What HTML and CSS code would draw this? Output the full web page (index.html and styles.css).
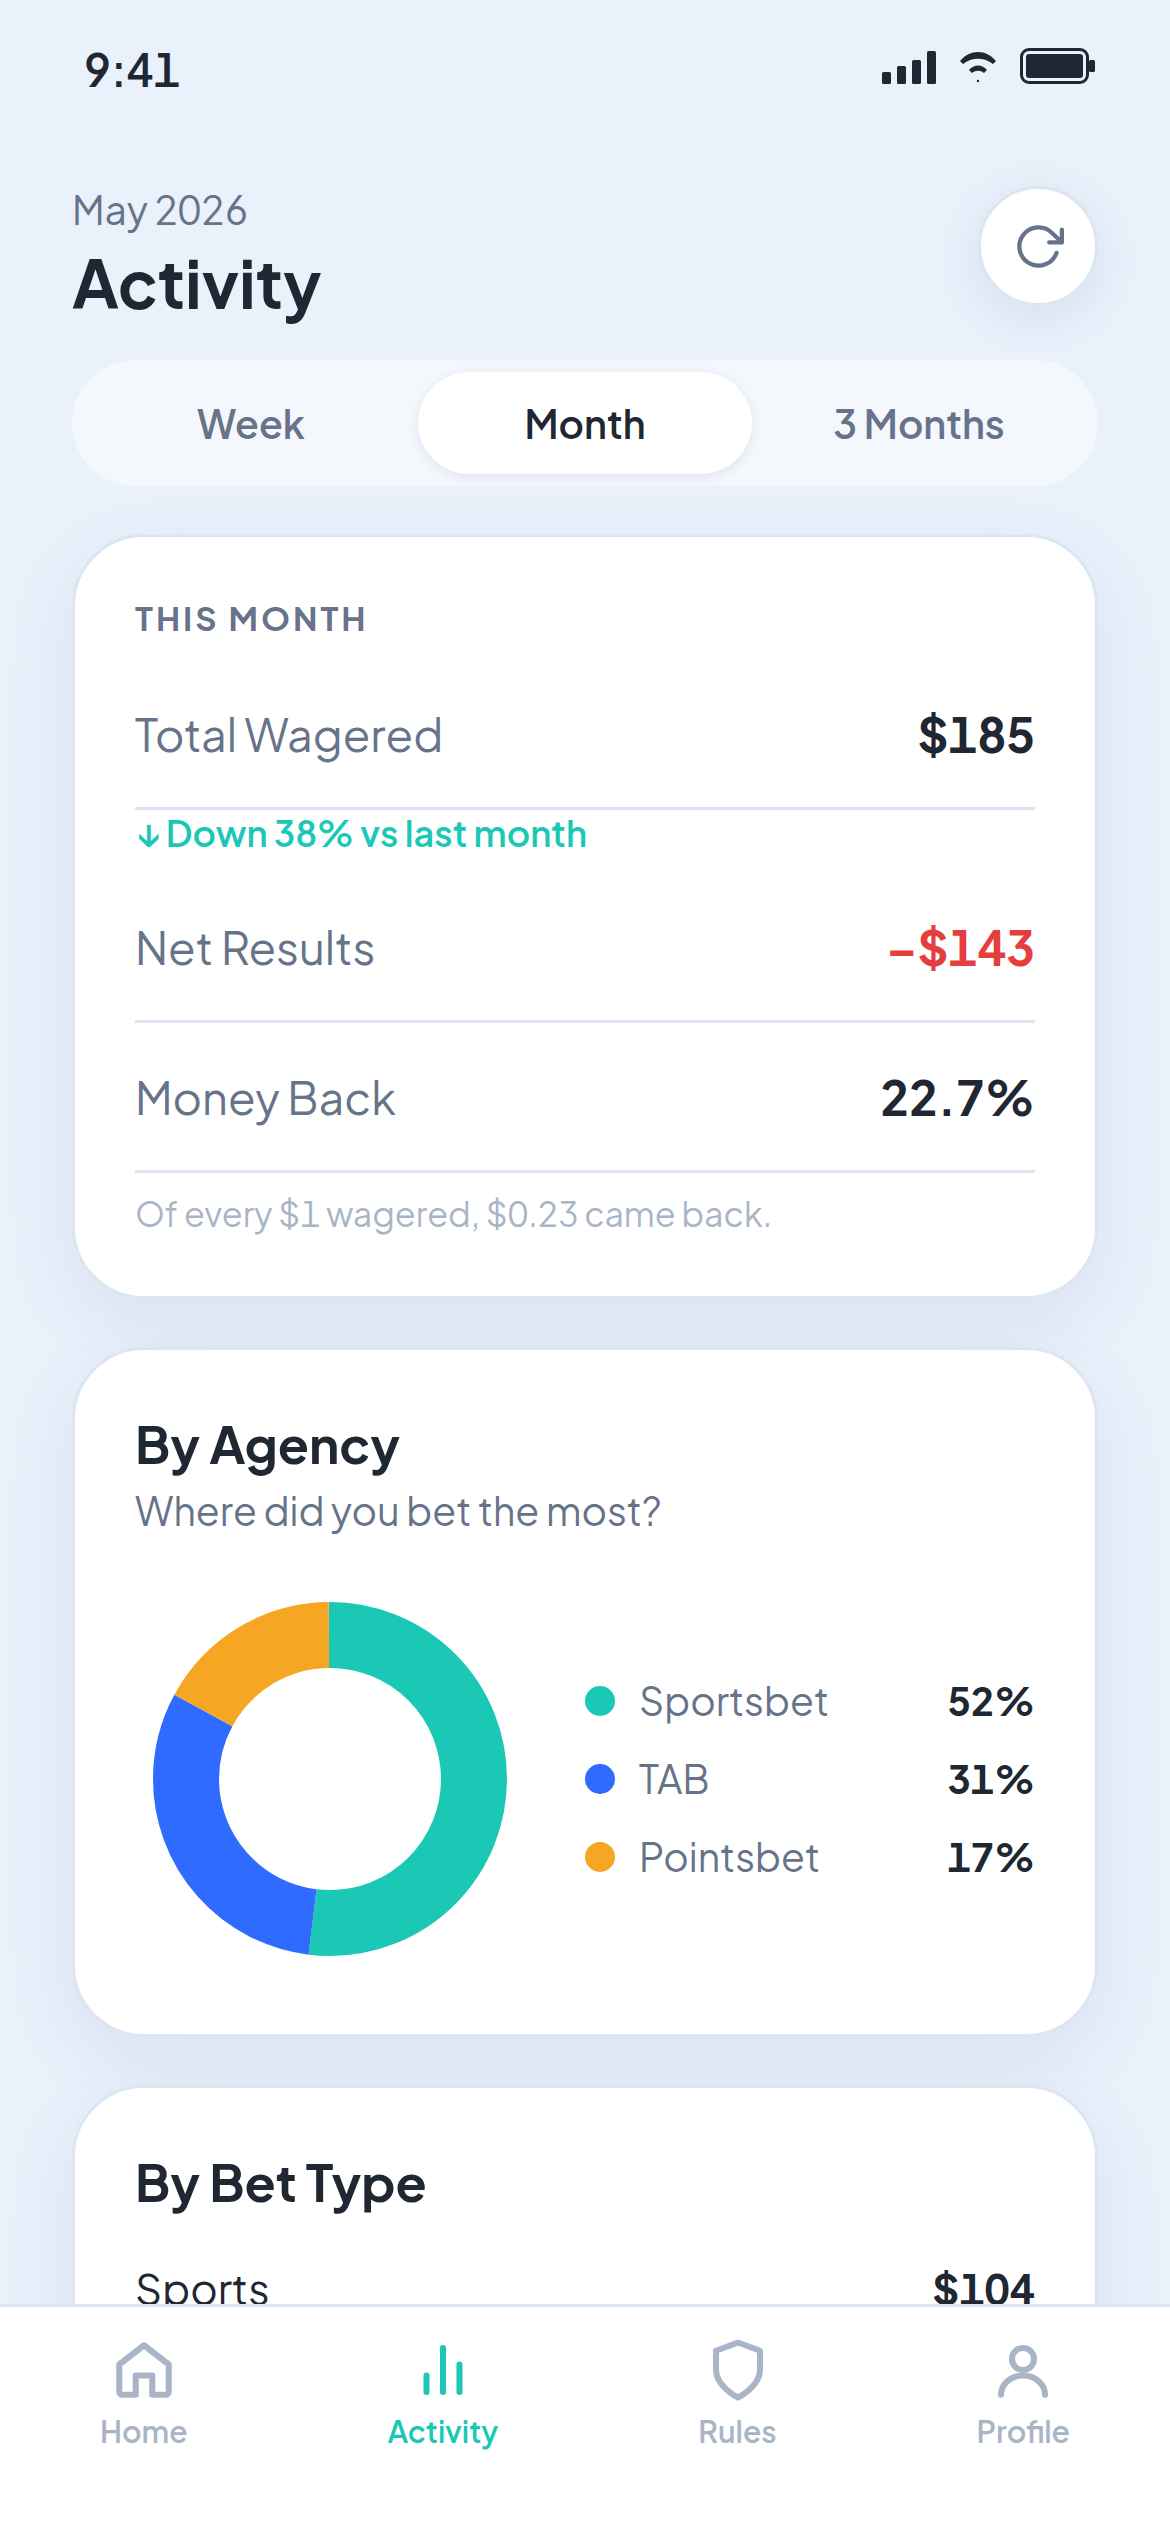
FILE: index.html
```html
<!DOCTYPE html>
<html lang="en">
<head>
    <meta charset="UTF-8">
    <meta name="viewport" content="width=device-width, initial-scale=1.0">
    <title>Activity</title>
    <link rel="stylesheet" href="styles.css">
</head>
<body>
    <div class="status-bar">
        <span class="time">9:41</span>
        <div class="status-icons">
            <svg width="54" height="36" viewBox="0 0 54 36" fill="currentColor" aria-hidden="true">
                <rect x="0" y="24" width="9" height="12" rx="1.5"/>
                <rect x="15" y="18" width="9" height="18" rx="1.5"/>
                <rect x="30" y="12" width="9" height="24" rx="1.5"/>
                <rect x="45" y="3" width="9" height="33" rx="1.5"/>
            </svg>
            <svg width="36" height="36" viewBox="0 0 36 36" fill="currentColor" aria-hidden="true">
                <path d="M0 13C10 1 26 1 36 13L33 16C24 9 12 9 3 16Z"/>
                <path d="M9 22C14 16 22 16 27 22L24 25C20 22 16 22 12 25Z"/>
                <circle cx="18" cy="33" r="1.2"/>
            </svg>
            <svg width="75" height="36" viewBox="0 0 75 36" fill="currentColor" aria-hidden="true">
                <rect x="1.5" y="1.5" width="66" height="33" rx="7.5" fill="none" stroke="currentColor" stroke-width="3"/>
                <rect x="6" y="6" width="57" height="24" rx="3"/>
                <rect x="69" y="12" width="6" height="12" rx="1.5"/>
            </svg>
        </div>
    </div>

    <main class="content">
        <header class="header">
            <div>
                <p class="date">May 2026</p>
                <h1>Activity</h1>
            </div>
            <button class="refresh" aria-label="Refresh">
                <svg width="51" height="51" viewBox="0 0 24 24" fill="none" stroke="currentColor" stroke-width="2" stroke-linecap="round" stroke-linejoin="round">
                    <path d="M23 4v6h-6"/>
                    <path d="M20.49 15a9 9 0 1 1-2.12-9.36L23 10"/>
                </svg>
            </button>
        </header>

        <div class="tabs">
            <button>Week</button>
            <button class="active">Month</button>
            <button>3 Months</button>
        </div>

        <section class="card">
            <h3 class="label">This Month</h3>
            <div class="row">
                <span>Total Wagered</span>
                <strong>$185</strong>
            </div>
            <p class="trend">↓ Down 38% vs last month</p>
            <div class="row">
                <span>Net Results</span>
                <strong class="negative">–$143</strong>
            </div>
            <div class="row">
                <span>Money Back</span>
                <strong>22.7%</strong>
            </div>
            <p class="note">Of every $1 wagered, $0.23 came back.</p>
        </section>

        <section class="card">
            <h2>By Agency</h2>
            <p class="subtitle">Where did you bet the most?</p>
            <div class="chart">
                <svg class="donut" viewBox="0 0 130 130" fill="none" stroke-width="22" role="img" aria-label="Bets by agency">
                    <g transform="rotate(-90 65 65)">
                        <circle class="teal" cx="65" cy="65" r="48" pathLength="100" stroke-dasharray="52 48"/>
                        <circle class="blue" cx="65" cy="65" r="48" pathLength="100" stroke-dasharray="31 69" stroke-dashoffset="-52"/>
                        <circle class="orange" cx="65" cy="65" r="48" pathLength="100" stroke-dasharray="17 83" stroke-dashoffset="-83"/>
                    </g>
                </svg>
                <ul class="legend">
                    <li><i class="dot teal"></i><span>Sportsbet</span><strong>52%</strong></li>
                    <li><i class="dot blue"></i><span>TAB</span><strong>31%</strong></li>
                    <li><i class="dot orange"></i><span>Pointsbet</span><strong>17%</strong></li>
                </ul>
            </div>
        </section>

        <section class="card">
            <h2>By Bet Type</h2>
            <div class="row bet">
                <span>Sports</span>
                <strong>$104</strong>
            </div>
        </section>
    </main>

    <nav class="bottom-nav">
        <a href="#home">
            <svg viewBox="0 0 24 24"><path d="M3 10l9-7 9 7v10a1 1 0 0 1-1 1h-5v-7H9v7H4a1 1 0 0 1-1-1z"/></svg>
            Home
        </a>
        <a href="#activity" class="active">
            <svg viewBox="0 0 24 24"><path d="M6 20v-6M12 20V4M18 20V10"/></svg>
            Activity
        </a>
        <a href="#rules">
            <svg viewBox="0 0 24 24"><path d="M12 22s8-4 8-10V5l-8-3-8 3v7c0 6 8 10 8 10z"/></svg>
            Rules
        </a>
        <a href="#profile">
            <svg viewBox="0 0 24 24"><circle cx="12" cy="8" r="4"/><path d="M4 21a8 7 0 0 1 16 0"/></svg>
            Profile
        </a>
    </nav>
</body>
</html>
```
FILE: styles.css
```css
* {
    box-sizing: border-box;
    margin: 0;
    padding: 0;
}
body {
    font-family: "Plus Jakarta Sans", Inter, sans-serif;
    font-variant-numeric: tabular-nums;
    height: 100vh;
    display: flex;
    flex-direction: column;
    overflow: hidden;
    color: #1f2733;
    background: #e9f1fb;
}
button {
    font-family: inherit;
    border: none;
    cursor: pointer;
}

/* Status bar */
.status-bar {
    flex: none;
    display: flex;
    justify-content: space-between;
    align-items: center;
    height: 132px;
    padding: 0 75px 0 84px;
}
.time {
    font-size: 45px;
    line-height: 60px;
    font-weight: 600;
    padding-top: 6px;
}
.status-icons {
    display: flex;
    gap: 24px;
}

/* Scrolling content */
.content {
    flex: 1;
    min-height: 0;
    overflow-y: auto;
    scrollbar-width: none;
    padding: 54px 72px;
}
.header {
    display: flex;
    justify-content: space-between;
    align-items: flex-start;
    margin-bottom: 30px;
}
.date {
    font-size: 39px;
    line-height: 48px;
    color: #667389;
}
h1 {
    font-size: 66px;
    line-height: 96px;
    font-weight: 700;
}
.refresh {
    display: flex;
    align-items: center;
    justify-content: center;
    width: 120px;
    height: 120px;
    border: 3px solid #dce6f2;
    border-radius: 50%;
    background: #fff;
    color: #667389;
    box-shadow: 0 12px 48px rgba(90, 90, 150, 0.12);
}

/* Period tabs */
.tabs {
    display: flex;
    padding: 12px;
    margin-bottom: 48px;
    border-radius: 63px;
    background: #f4f7fc;
}
.tabs button {
    flex: 1;
    height: 102px;
    border-radius: 51px;
    background: none;
    color: #667389;
    font-size: 39px;
    font-weight: 600;
}
.tabs .active {
    background: #fff;
    color: #1f2733;
    box-shadow: 0 3px 12px rgba(90, 90, 150, 0.12);
}

/* Cards */
.card {
    padding: 60px;
    margin-bottom: 48px;
    border: 3px solid #dce6f2;
    border-radius: 72px;
    background: #fff;
    box-shadow: 0 24px 72px rgba(90, 90, 150, 0.1);
}
.label {
    font-size: 33px;
    line-height: 42px;
    font-weight: 700;
    letter-spacing: 3px;
    text-transform: uppercase;
    color: #667389;
    margin-bottom: 21px;
}
h2 {
    font-size: 51px;
    line-height: 66px;
    font-weight: 700;
}
.row {
    display: flex;
    justify-content: space-between;
    padding: 45px 0;
    border-bottom: 3px solid #dce6f2;
    font-size: 45px;
    line-height: 57px;
    color: #667389;
}
.row strong {
    font-size: 48px;
    font-weight: 700;
    color: #1f2733;
}
.row .negative {
    color: #e53e3e;
}
.bet, .bet strong {
    font-size: 42px;
    color: #1f2733;
}
.trend {
    font-size: 36px;
    line-height: 45px;
    font-weight: 600;
    color: #1bc8b5;
    margin-bottom: 18px;
}
.note {
    font-size: 34px;
    line-height: 45px;
    margin-top: 18px;
    color: #a9b5c6;
}
.subtitle {
    font-size: 39px;
    line-height: 69px;
    color: #667389;
    margin-bottom: 39px;
}

/* Donut chart */
.chart {
    display: flex;
    align-items: center;
    gap: 60px;
}
.donut {
    width: 390px;
    height: 390px;
}
.legend {
    flex: 1;
    display: flex;
    flex-direction: column;
    gap: 24px;
    list-style: none;
}
.legend li {
    display: flex;
    align-items: center;
    gap: 24px;
    font-size: 39px;
    line-height: 54px;
    color: #667389;
}
.legend strong {
    margin-left: auto;
    color: #1f2733;
}
.dot {
    width: 30px;
    height: 30px;
    border-radius: 50%;
}
.teal { background: #1bc8b5; stroke: #1bc8b5; }
.blue { background: #2f6bff; stroke: #2f6bff; }
.orange { background: #f5a623; stroke: #f5a623; }

/* Bottom navigation */
.bottom-nav {
    flex: none;
    position: relative;
    display: flex;
    justify-content: space-around;
    height: 228px;
    padding-top: 30px;
    border-top: 3px solid #dce6f2;
    background: #fff;
}
.bottom-nav a {
    display: flex;
    flex-direction: column;
    align-items: center;
    gap: 9px;
    font-size: 30px;
    line-height: 39px;
    font-weight: 600;
    text-decoration: none;
    color: #a9b5c6;
}
.bottom-nav .active {
    color: #1bc8b5;
}
.bottom-nav svg {
    width: 66px;
    height: 66px;
    fill: none;
    stroke: currentColor;
    stroke-width: 2.2;
    stroke-linecap: round;
    stroke-linejoin: round;
}
```
